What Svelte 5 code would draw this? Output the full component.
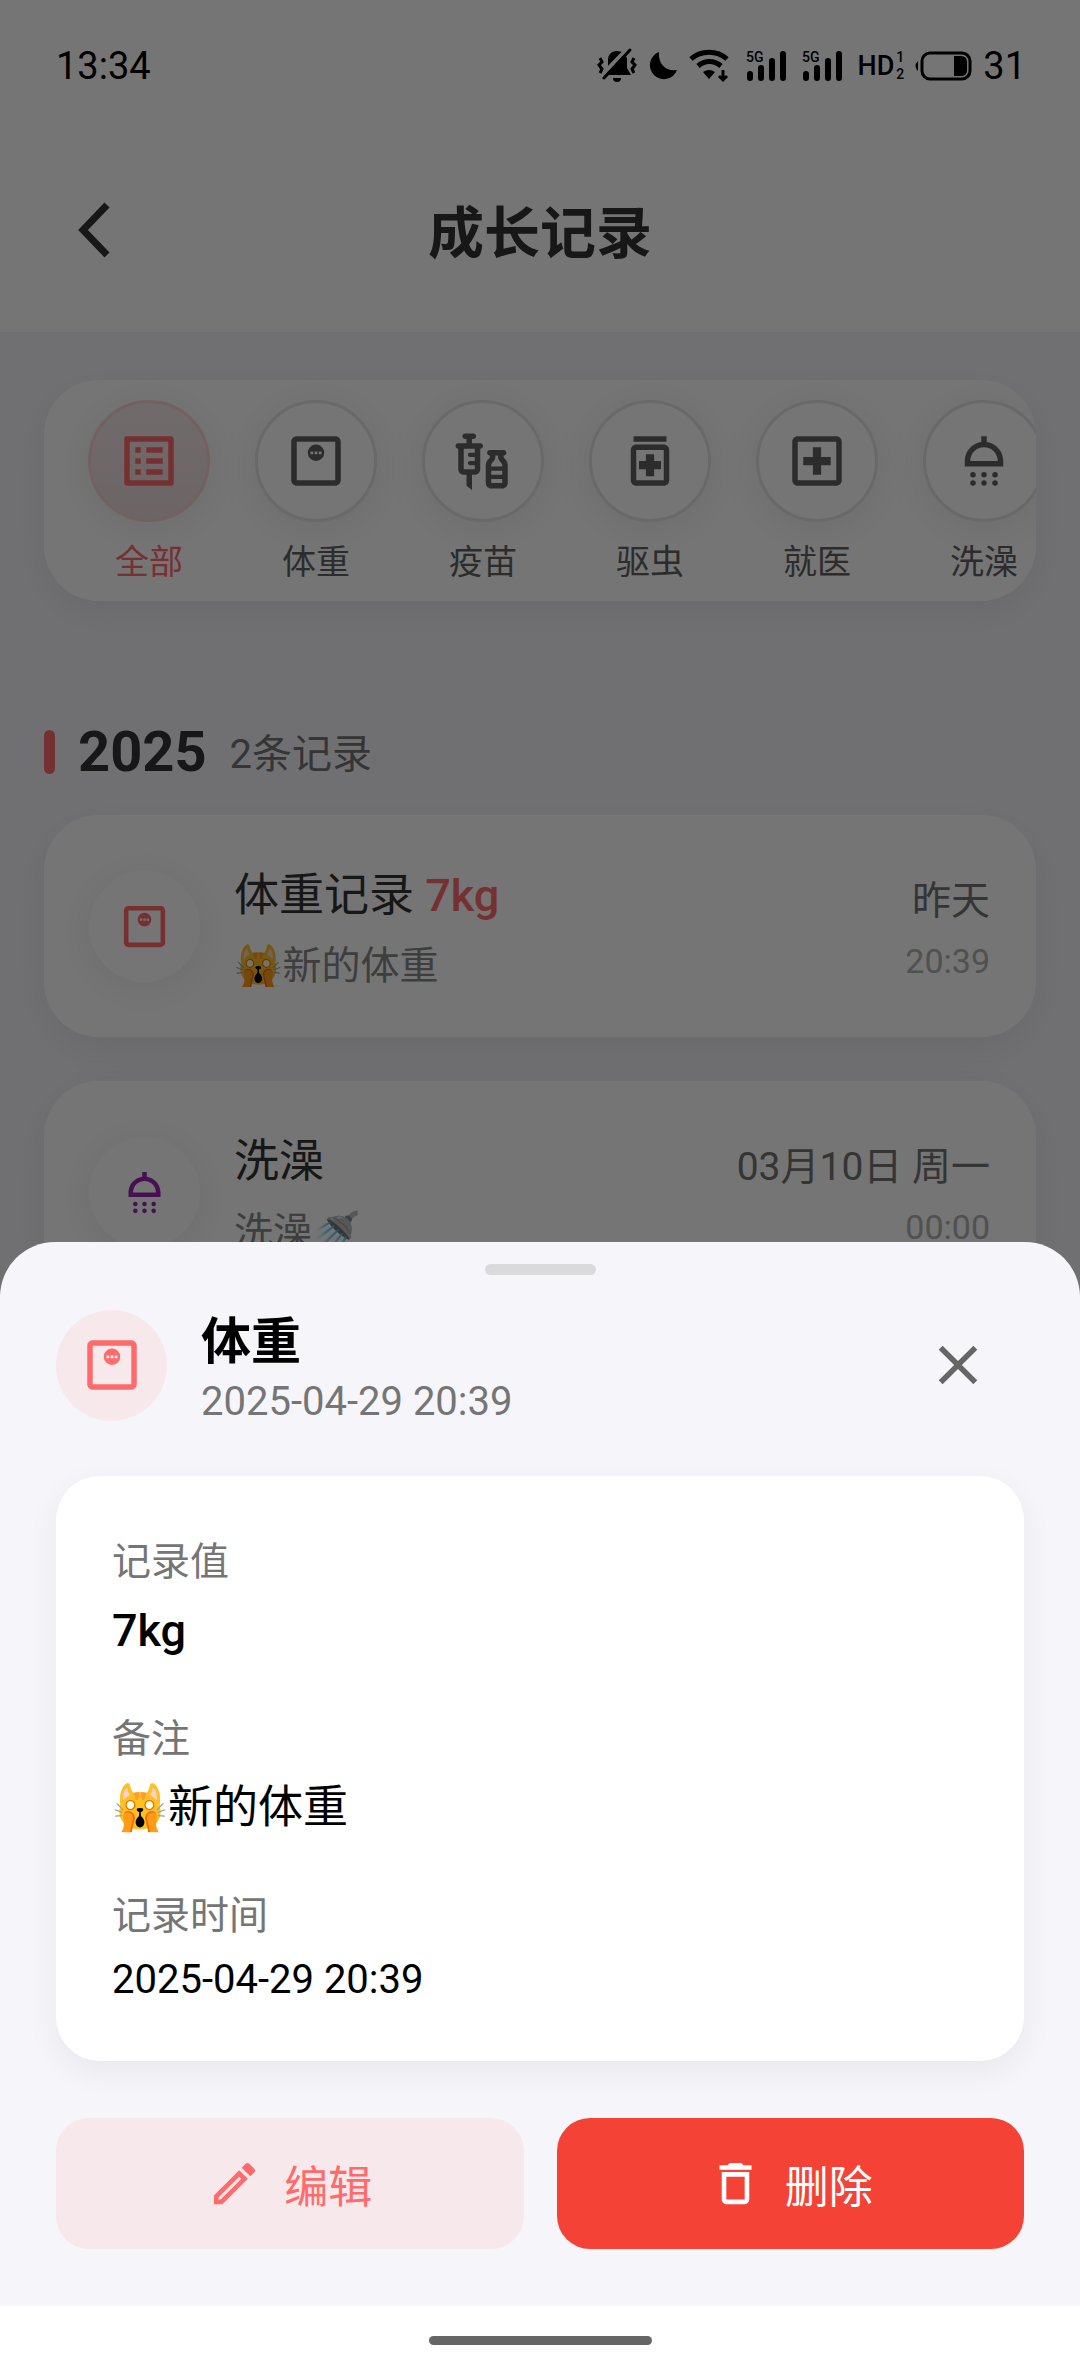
<script>
  const icons = {
    list: 'M19 5v14H5V5h14m1.1-2H3.9c-.5 0-.9.4-.9.9v16.2c0 .4.4.9.9.9h16.2c.4 0 .9-.5.9-.9V3.9c0-.5-.5-.9-.9-.9zM11 7h6v2h-6V7zm0 4h6v2h-6v-2zm0 4h6v2h-6zM7 7h2v2H7zm0 4h2v2H7zm0 4h2v2H7z',
    weight: 'M19 3H5c-1.1 0-2 .9-2 2v14c0 1.1.9 2 2 2h14c1.1 0 2-.9 2-2V5c0-1.1-.9-2-2-2zM19 19H5V5h14zM12 6a3 3 0 1 0 0 6a3 3 0 1 0 0-6zM10 8.5h1v1h-1zM11.5 8.5h1v1h-1zM13 8.5h1v1h-1z',
    vaccine: 'M11 5.5H8V4h.5c.55 0 1-.45 1-1s-.45-1-1-1h-3c-.55 0-1 .45-1 1s.45 1 1 1H6v1.5H3c-.55 0-1 .45-1 1s.45 1 1 1V15c0 1.1.9 2 2 2h1v4l2 1.5V17h1c1.1 0 2-.9 2-2V7.5c.55 0 1-.45 1-1s-.45-1-1-1zM9 9H7.25c-.41 0-.75.34-.75.75s.34.75.75.75H9V12H7.25c-.41 0-.75.34-.75.75s.34.75.75.75H9V15H5V7.5h4V9zM19.5 10.5V10c.55 0 1-.45 1-1s-.45-1-1-1h-5c-.55 0-1 .45-1 1s.45 1 1 1v.5c0 .5-1.5 1.16-1.5 3V20c0 1.1.9 2 2 2h4c1.1 0 2-.9 2-2v-6.5c0-1.84-1.5-2.5-1.5-3zM16.5 10.5V10h1v.5c0 1.6 1.5 2 1.5 3v.5h-4v-.5c0-1 1.5-1.4 1.5-3zM19 15.5V17h-4v-1.5h4zM15 20v-1.5h4V20h-4z',
    medication: 'M6 3h12v2H6zM17 6H7c-1.1 0-2 .9-2 2v11c0 1.1.9 2 2 2h10c1.1 0 2-.9 2-2V8c0-1.1-.9-2-2-2zM17 19H7V8h10zM10.5 17.5h3V15H16v-3h-2.5V9.5h-3V12H8v3h2.5z',
    hospital: 'M19 3H5c-1.1 0-2 .9-2 2v14c0 1.1.9 2 2 2h14c1.1 0 2-.9 2-2V5c0-1.1-.9-2-2-2zM19 19H5V5h14zM10.5 17h3v-3.5H17v-3h-3.5V7h-3v3.5H7v3h3.5z',
    shower: 'M13 5.08V3h-2v2.08C7.61 5.57 5 8.47 5 12v2h14v-2c0-3.53-2.61-6.43-6-6.92zM7 12c0-2.76 2.24-5 5-5s5 2.24 5 5zM8 16a1 1 0 1 0 0 2a1 1 0 1 0 0-2zM12 16a1 1 0 1 0 0 2a1 1 0 1 0 0-2zM16 16a1 1 0 1 0 0 2a1 1 0 1 0 0-2zM8 19a1 1 0 1 0 0 2a1 1 0 1 0 0-2zM12 19a1 1 0 1 0 0 2a1 1 0 1 0 0-2zM16 19a1 1 0 1 0 0 2a1 1 0 1 0 0-2z',
    close: 'M19 6.41L17.59 5 12 10.59 6.41 5 5 6.41 10.59 12 5 17.59 6.41 19 12 13.41 17.59 19 19 17.59 13.41 12z',
    edit: 'M14.06 9.02l.92.92L5.92 19H5v-.92l9.06-9.06M17.66 3c-.25 0-.51.1-.7.29l-1.83 1.83 3.75 3.75 1.83-1.83c.39-.39.39-1.02 0-1.41l-2.34-2.34c-.2-.2-.45-.29-.71-.29zm-3.6 3.19L3 17.25V21h3.75L17.81 9.94l-3.75-3.75z',
    trash: 'M16 9v10H8V9h8m-1.5-6h-5l-1 1H5v2h14V4h-3.5l-1-1zM18 7H6v12c0 1.1.9 2 2 2h8c1.1 0 2-.9 2-2V7z',
  };

  const filters = [
    { icon: 'list', label: '全部' },
    { icon: 'weight', label: '体重' },
    { icon: 'vaccine', label: '疫苗' },
    { icon: 'medication', label: '驱虫' },
    { icon: 'hospital', label: '就医' },
    { icon: 'shower', label: '洗澡' },
  ];
  let activeFilter = '全部';

  const records = [
    { icon: 'weight', kind: 'weight', title: '体重记录', value: '7kg', note: '🙀新的体重', date: '昨天', time: '20:39' },
    { icon: 'shower', kind: 'bath', title: '洗澡', value: '', note: '洗澡🚿', date: '03月10日 周一', time: '00:00' },
  ];

  let sheetOpen = true;
</script>

<div class="screen">
  <div class="page">
    <div class="status-bar">
      <span>13:34</span>
      <div class="status-icons">
        <svg width="40" height="36" viewBox="0 0 40 36" aria-hidden="true">
          <path d="M20 3c-6 0-9 4-9 9v8l-4 7h27l-4-7v-8c0-5-4-9-10-9z" />
          <path d="M16 30h8a4 4 0 0 1-8 0z" />
          <path d="M31 0L3 29" stroke="#fff" stroke-width="4" />
          <path d="M33 2L7 30" stroke="#000" stroke-width="3" stroke-linecap="round" />
          <path d="M3 10l2 4-3 3 3 4-2 4M37 10l-2 4 3 3-3 4 2 4" fill="none" stroke="#000" stroke-width="3" />
        </svg>
        <svg width="30" height="30" viewBox="0 0 30 30" aria-hidden="true">
          <path d="M11 1A14 14 0 1 0 29 19C18 21 10 13 11 1z" />
        </svg>
        <svg width="42" height="34" viewBox="0 0 42 34" aria-hidden="true">
          <path d="M2 10C12 1 28 1 38 10M9 17c7-6 16-6 23 0" fill="none" stroke="#000" stroke-width="5" />
          <path d="M14 23q6-4 12 0l-6 7z" />
          <path d="M34 21v9M30 27l4 4 4-4" fill="none" stroke="#000" stroke-width="3" />
        </svg>
        {#each [1, 2] as sim}
          <svg class="signal" width="41" height="34" viewBox="0 0 41 34" aria-hidden="true">
            <text x="0" y="13" font-size="14">5G</text>
            <path d="M4 25v4M15 19v10M26 12v17M37 5v24" fill="none" stroke="#000" stroke-width="6" stroke-linecap="round" />
          </svg>
        {/each}
        <div class="hd">
          <span>HD</span>
          <span class="hd-sims"><span>1</span><span>2</span></span>
        </div>
        <svg width="57" height="30" viewBox="0 0 57 30" aria-hidden="true">
          <rect x="7" y="2" width="48" height="26" rx="8" fill="none" stroke="#000" stroke-width="3" />
          <path d="M39 5h7q6 0 6 6v8q0 6-6 6h-7zM3 10v10q-5-5 0-10z" />
        </svg>
        <span>31</span>
      </div>
    </div>

    <header>
      <button class="back" aria-label="返回">
        <svg width="34" height="56" viewBox="0 0 34 56" aria-hidden="true">
          <path d="M30 3L6 28l24 25" fill="none" stroke="currentColor" stroke-width="7" />
        </svg>
      </button>
      <h1>成长记录</h1>
    </header>

    <main>
      <div class="filters">
        {#each filters as filter}
          <button
            class="filter"
            class:active={activeFilter === filter.label}
            on:click={() => activeFilter = filter.label}
          >
            <span class="filter-icon">
              <svg width="66" height="66" viewBox="0 0 24 24" aria-hidden="true"><path fill-rule="evenodd" d={icons[filter.icon]} /></svg>
            </span>
            {filter.label}
          </button>
        {/each}
      </div>

      <div class="year">
        <h2>2025</h2>
        <span>2条记录</span>
      </div>

      {#each records as record}
        <article class="card record">
          <div class="record-icon {record.kind}">
            <svg width="55" height="55" viewBox="0 0 24 24" aria-hidden="true"><path fill-rule="evenodd" d={icons[record.icon]} /></svg>
          </div>
          <div class="record-text">
            <h3>{record.title} {#if record.value}<strong>{record.value}</strong>{/if}</h3>
            <p>{record.note}</p>
          </div>
          <div class="record-when">
            <span class="date">{record.date}</span>
            <span class="time">{record.time}</span>
          </div>
        </article>
      {/each}
    </main>
  </div>

  {#if sheetOpen}
    <div class="overlay">
      <section class="sheet" role="dialog" aria-labelledby="sheet-title">
        <div class="handle"></div>
        <div class="sheet-header">
          <div class="sheet-icon">
            <svg width="66" height="66" viewBox="0 0 24 24" aria-hidden="true"><path fill-rule="evenodd" d={icons.weight} /></svg>
          </div>
          <div class="sheet-heading">
            <h2 id="sheet-title">体重</h2>
            <p>2025-04-29 20:39</p>
          </div>
          <button class="close" aria-label="关闭" on:click={() => sheetOpen = false}>
            <svg width="66" height="66" viewBox="0 0 24 24" aria-hidden="true"><path d={icons.close} /></svg>
          </button>
        </div>

        <dl class="details">
          <div>
            <dt>记录值</dt>
            <dd class="value">7kg</dd>
          </div>
          <div>
            <dt>备注</dt>
            <dd>🙀新的体重</dd>
          </div>
          <div>
            <dt>记录时间</dt>
            <dd class="timestamp">2025-04-29 20:39</dd>
          </div>
        </dl>

        <div class="actions">
          <button class="edit">
            <svg width="55" height="55" viewBox="0 0 24 24" aria-hidden="true"><path d={icons.edit} /></svg>
            编辑
          </button>
          <button class="delete">
            <svg width="55" height="55" viewBox="0 0 24 24" aria-hidden="true"><path d={icons.trash} /></svg>
            删除
          </button>
        </div>
      </section>
      <div class="nav-bar"><div class="nav-pill"></div></div>
    </div>
  {/if}
</div>

<style>
  .screen {
    position: relative;
    height: 100vh;
    overflow: hidden;
    background: #f5f5fa;
    color: #000;
    font-family: Roboto, "Noto Sans CJK SC", "Noto Color Emoji", sans-serif;
  }
  h1, h2, h3, p, dl, dd {
    margin: 0;
  }
  button {
    padding: 0;
    border: 0;
    background: none;
    color: inherit;
    font: inherit;
    cursor: pointer;
  }
  svg {
    display: block;
    flex: none;
    fill: currentColor;
  }

  .status-bar {
    display: flex;
    align-items: center;
    justify-content: space-between;
    height: 132px;
    padding: 0 54px 0 56px;
    background: #fff;
    font-size: 38px;
  }
  .status-icons {
    display: flex;
    align-items: center;
    gap: 11px;
  }
  .signal {
    margin-left: 4px;
    font-weight: 500;
  }
  .hd {
    display: flex;
    align-items: center;
    gap: 2px;
    margin-left: 4px;
    font-size: 27px;
    font-weight: 500;
    line-height: 32px;
  }
  .hd-sims {
    display: flex;
    flex-direction: column;
    font-size: 14px;
    line-height: 17px;
  }

  header {
    display: grid;
    grid-template-columns: 132px 1fr 132px;
    align-items: center;
    height: 196px;
    padding: 0 28px 4px;
    background: #fff;
    color: #333;
  }
  .back {
    display: flex;
    align-items: center;
    justify-content: center;
    height: 132px;
  }
  h1 {
    padding-top: 8px;
    font-size: 56px;
    font-weight: 700;
    line-height: 80px;
    text-align: center;
  }

  main {
    padding: 48px 44px 0;
  }
  .filters {
    display: flex;
    gap: 45px;
    padding: 20px 44px 17px;
    overflow: hidden;
    border-radius: 55px;
    background: #fff;
    box-shadow: 0 11px 44px rgba(0, 0, 0, 0.07);
  }
  .filter {
    display: flex;
    flex: none;
    flex-direction: column;
    align-items: center;
    gap: 18px;
    color: #616161;
    font-size: 34px;
    line-height: 44px;
  }
  .filter-icon {
    display: flex;
    align-items: center;
    justify-content: center;
    box-sizing: border-box;
    width: 122px;
    height: 122px;
    border: 3px solid #e4e4e4;
    border-radius: 50%;
    background: #fff;
    box-shadow: 0 6px 44px rgba(0, 0, 0, 0.07);
  }
  .filter.active {
    color: #ff6b6b;
  }
  .filter.active .filter-icon {
    border-color: #f6d4d4;
    background: linear-gradient(#f8e8e8, #ecdcdc);
  }

  .year {
    display: flex;
    align-items: center;
    gap: 23px;
    margin: 119px 0 31px;
    color: #757575;
    font-size: 40px;
    line-height: 64px;
  }
  .year span {
    padding-top: 6px;
    line-height: 58px;
  }
  .year h2 {
    color: #333;
    font-size: 56px;
    font-weight: 700;
  }
  .year::before {
    content: "";
    width: 11px;
    height: 44px;
    border-radius: 6px;
    background: #ff6b6b;
  }

  .card {
    border-radius: 55px;
    background: #fff;
    box-shadow: 0 11px 44px rgba(0, 0, 0, 0.07);
  }
  .record {
    display: flex;
    align-items: center;
    gap: 34px;
    margin-bottom: 44px;
    padding: 44px 46px 44px 45px;
  }
  .record-icon {
    display: flex;
    align-items: center;
    justify-content: center;
    width: 111px;
    height: 111px;
    border-radius: 50%;
    background: #fff;
    box-shadow: 0 6px 44px rgba(0, 0, 0, 0.07);
  }
  .record-icon.weight {
    color: #ff6b6b;
  }
  .record-icon.bath {
    color: #9c27b0;
  }
  .record-text {
    display: flex;
    flex: 1;
    flex-direction: column;
    gap: 10px;
    padding-top: 3px;
  }
  .record-text h3 {
    color: #333;
    font-size: 45px;
    font-weight: 400;
    line-height: 67px;
  }
  .record-text strong {
    color: #ff6b6b;
    font-weight: 500;
  }
  .record-text p {
    color: #888;
    font-size: 39px;
    line-height: 54px;
  }
  .record-when {
    display: flex;
    flex-direction: column;
    gap: 9px;
    padding-top: 3px;
    text-align: right;
  }
  .date {
    color: #757575;
    font-size: 39px;
    line-height: 59px;
  }
  .time {
    color: #b0b0b0;
    font-size: 34px;
    line-height: 43px;
  }

  .overlay {
    position: absolute;
    inset: 0;
    display: flex;
    flex-direction: column;
    justify-content: flex-end;
    background: rgba(0, 0, 0, 0.54);
  }
  .sheet {
    padding: 22px 56px 57px;
    border-radius: 55px 55px 0 0;
    background: #f6f5fa;
  }
  .handle {
    width: 111px;
    height: 11px;
    margin: 0 auto 24px;
    border-radius: 6px;
    background: #dadadc;
  }
  .sheet-header {
    display: flex;
    align-items: center;
    margin-bottom: 45px;
  }
  .sheet-icon {
    display: flex;
    align-items: center;
    justify-content: center;
    width: 111px;
    height: 111px;
    margin-right: 34px;
    border-radius: 50%;
    background: #f7e9eb;
    color: #ff6b6b;
  }
  .sheet-heading {
    flex: 1;
    padding-top: 8px;
  }
  .sheet-heading h2 {
    font-size: 50px;
    font-weight: 700;
    line-height: 66px;
  }
  .sheet-heading p {
    color: #757575;
    font-size: 40px;
    line-height: 54px;
  }
  .close {
    display: flex;
    align-items: center;
    justify-content: center;
    width: 132px;
    height: 132px;
    color: #666;
  }

  .details {
    display: flex;
    flex-direction: column;
    gap: 50px;
    padding: 57px 56px;
    border-radius: 44px;
    background: #fff;
    box-shadow: 0 11px 33px rgba(0, 0, 0, 0.06);
  }
  dt {
    margin-bottom: 11px;
    color: #757575;
    font-size: 39px;
    line-height: 58px;
  }
  dd {
    font-size: 45px;
    line-height: 58px;
  }
  dd.value {
    font-weight: 500;
  }
  dd.timestamp {
    font-size: 40px;
    line-height: 48px;
  }

  .actions {
    display: grid;
    grid-template-columns: 1fr 1fr;
    gap: 33px;
    margin-top: 57px;
  }
  .actions button {
    display: flex;
    align-items: center;
    justify-content: center;
    gap: 22px;
    height: 131px;
    border-radius: 33px;
    font-size: 44px;
  }
  .actions .edit {
    background: #f7e9eb;
    color: #ff6b6b;
  }
  .actions .delete {
    background: #f44336;
    color: #fff;
  }

  .nav-bar {
    display: flex;
    align-items: center;
    justify-content: center;
    height: 69px;
    background: #fff;
  }
  .nav-pill {
    width: 223px;
    height: 9px;
    border-radius: 5px;
    background: #666;
  }
</style>
